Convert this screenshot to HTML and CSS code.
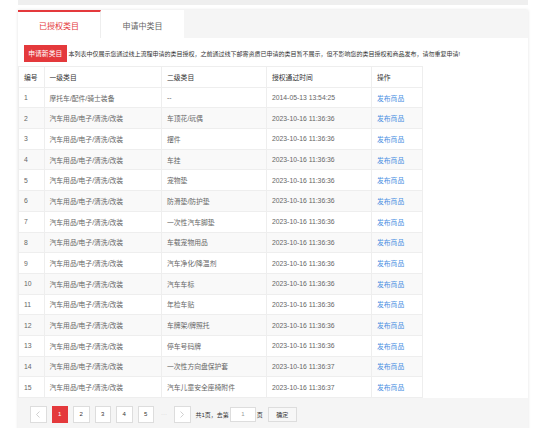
FILE: index.html
```html
<!DOCTYPE html>
<html lang="zh-CN">
<head>
    <meta charset="UTF-8">
    <title>类目管理</title>
    <link rel="stylesheet" href="styles.css">
</head>
<body>
    <div class="top-strip"></div>
    <div class="panel">
        <div class="tabs">
            <a class="tab active">已授权类目</a>
            <a class="tab">申请中类目</a>
        </div>
        <div class="toolbar">
            <button class="btn-apply">申请新类目</button>
            <span class="notice">本列表中仅展示您通过线上流程申请的类目授权，之前通过线下邮寄资质已申请的类目暂不展示，但不影响您的类目授权和商品发布，请勿重复申请!</span>
        </div>
        <table class="cat-table">
            <colgroup>
                <col class="col-no">
                <col class="col-first">
                <col class="col-second">
                <col class="col-time">
                <col class="col-op">
            </colgroup>
            <thead>
                <tr><th>编号</th><th>一级类目</th><th>二级类目</th><th>授权通过时间</th><th>操作</th></tr>
            </thead>
            <tbody>
                <tr><td>1</td><td>摩托车/配件/骑士装备</td><td>--</td><td>2014-05-13 13:54:25</td><td><a class="link" href="#">发布商品</a></td></tr>
                <tr><td>2</td><td>汽车用品/电子/清洗/改装</td><td>车顶花/玩偶</td><td>2023-10-16 11:36:36</td><td><a class="link" href="#">发布商品</a></td></tr>
                <tr><td>3</td><td>汽车用品/电子/清洗/改装</td><td>摆件</td><td>2023-10-16 11:36:36</td><td><a class="link" href="#">发布商品</a></td></tr>
                <tr><td>4</td><td>汽车用品/电子/清洗/改装</td><td>车挂</td><td>2023-10-16 11:36:36</td><td><a class="link" href="#">发布商品</a></td></tr>
                <tr><td>5</td><td>汽车用品/电子/清洗/改装</td><td>宠物垫</td><td>2023-10-16 11:36:36</td><td><a class="link" href="#">发布商品</a></td></tr>
                <tr><td>6</td><td>汽车用品/电子/清洗/改装</td><td>防滑垫/防护垫</td><td>2023-10-16 11:36:36</td><td><a class="link" href="#">发布商品</a></td></tr>
                <tr><td>7</td><td>汽车用品/电子/清洗/改装</td><td>一次性汽车脚垫</td><td>2023-10-16 11:36:36</td><td><a class="link" href="#">发布商品</a></td></tr>
                <tr><td>8</td><td>汽车用品/电子/清洗/改装</td><td>车载宠物用品</td><td>2023-10-16 11:36:36</td><td><a class="link" href="#">发布商品</a></td></tr>
                <tr><td>9</td><td>汽车用品/电子/清洗/改装</td><td>汽车净化/降温剂</td><td>2023-10-16 11:36:36</td><td><a class="link" href="#">发布商品</a></td></tr>
                <tr><td>10</td><td>汽车用品/电子/清洗/改装</td><td>汽车车标</td><td>2023-10-16 11:36:36</td><td><a class="link" href="#">发布商品</a></td></tr>
                <tr><td>11</td><td>汽车用品/电子/清洗/改装</td><td>年检车贴</td><td>2023-10-16 11:36:36</td><td><a class="link" href="#">发布商品</a></td></tr>
                <tr><td>12</td><td>汽车用品/电子/清洗/改装</td><td>车牌架/牌照托</td><td>2023-10-16 11:36:36</td><td><a class="link" href="#">发布商品</a></td></tr>
                <tr><td>13</td><td>汽车用品/电子/清洗/改装</td><td>停车号码牌</td><td>2023-10-16 11:36:36</td><td><a class="link" href="#">发布商品</a></td></tr>
                <tr><td>14</td><td>汽车用品/电子/清洗/改装</td><td>一次性方向盘保护套</td><td>2023-10-16 11:36:37</td><td><a class="link" href="#">发布商品</a></td></tr>
                <tr><td>15</td><td>汽车用品/电子/清洗/改装</td><td>汽车儿童安全座椅附件</td><td>2023-10-16 11:36:37</td><td><a class="link" href="#">发布商品</a></td></tr>
            </tbody>
        </table>
        <div class="pager">
            <a class="page-btn arrow">
                <svg width="4" height="7" viewBox="0 0 4 7"><polyline points="3.5,0.5 0.5,3.5 3.5,6.5" fill="none" stroke="#c4c4c4" stroke-width="0.8"/></svg>
            </a>
            <a class="page-btn current">1</a>
            <a class="page-btn">2</a>
            <a class="page-btn">3</a>
            <a class="page-btn">4</a>
            <a class="page-btn">5</a>
            <span class="dots">···</span>
            <a class="page-btn arrow">
                <svg width="4" height="7" viewBox="0 0 4 7"><polyline points="0.5,0.5 3.5,3.5 0.5,6.5" fill="none" stroke="#c4c4c4" stroke-width="0.8"/></svg>
            </a>
            <span class="jump">
                共1页，去第
                <input class="page-input" type="text" value="1">
                页
            </span>
            <button class="btn-ok">确定</button>
        </div>
    </div>
</body>
</html>
```

FILE: styles.css
```css
body {
    margin: 0;
    background: #fff;
    font-family: "Liberation Sans", "Noto Sans CJK SC", sans-serif;
    color: #666;
}
.top-strip {
    height: 4.5px;
    margin: 0 22px 0 18px;
    background: #efefef;
}
.panel {
    margin: 5.5px 22px 0 18px;
    background: #fff;
    box-shadow: 0 0 3px rgba(0, 0, 0, 0.12);
}
.tabs {
    display: flex;
    height: 28px;
    background: #f5f5f5;
}
.tab {
    width: 83px;
    box-sizing: border-box;
    display: flex;
    align-items: center;
    justify-content: center;
    background: #fff;
    border-top: 2px solid transparent;
    font-size: 8px;
    color: #666;
    cursor: pointer;
}
.tab.active {
    border-top-color: #e4393c;
    border-right: 1px solid #eee;
    color: #e4393c;
}
.toolbar {
    display: flex;
    align-items: center;
    gap: 2px;
    padding: 7px 6px 4.5px;
}
.btn-apply {
    width: 42.5px;
    height: 16.5px;
    padding: 0;
    border: none;
    background: #e4393c;
    color: #fff;
    font-family: inherit;
    font-size: 6.8px;
}
.notice {
    font-size: 6px;
    color: #333;
    white-space: nowrap;
}
.cat-table {
    width: 404px;
    border-collapse: collapse;
    table-layout: fixed;
    font-size: 6.8px;
}
.col-no { width: 25.5px; }
.col-first { width: 117.5px; }
.col-second { width: 105px; }
.col-time { width: 105px; }
.col-op { width: 51px; }
.cat-table th,
.cat-table td {
    height: 19.7px;
    padding: 0 5px;
    border: 1px solid #eee;
    text-align: left;
    white-space: nowrap;
    overflow: hidden;
}
.cat-table th {
    font-weight: normal;
    color: #333;
}
.cat-table tbody tr:nth-child(even) {
    background: #f9f9f9;
}
.link {
    color: #4a90e2;
    text-decoration: none;
}
.pager {
    display: flex;
    align-items: center;
    gap: 5px;
    padding: 8px 12px;
    background: #f5f5f5;
    font-size: 6px;
    color: #333;
}
.page-btn {
    width: 16.5px;
    height: 16.5px;
    box-sizing: border-box;
    display: flex;
    align-items: center;
    justify-content: center;
    border: 1px solid #ddd;
    background: #fff;
    color: #333;
}
.page-btn.current {
    background: #e4393c;
    border-color: #e4393c;
    color: #fff;
}
.dots {
    width: 10px;
    text-align: center;
    color: #ccc;
}
.jump {
    display: flex;
    align-items: center;
    gap: 1px;
    white-space: nowrap;
}
.page-input {
    width: 26px;
    height: 15px;
    box-sizing: border-box;
    padding: 0;
    border: 1px solid #ddd;
    background: #fff;
    text-align: center;
    font-family: inherit;
    font-size: 6px;
    color: #999;
}
.btn-ok {
    width: 29px;
    height: 14.5px;
    padding: 0;
    border: 1px solid #ddd;
    background: #f7f7f7;
    font-family: inherit;
    font-size: 6px;
    color: #333;
}
```
